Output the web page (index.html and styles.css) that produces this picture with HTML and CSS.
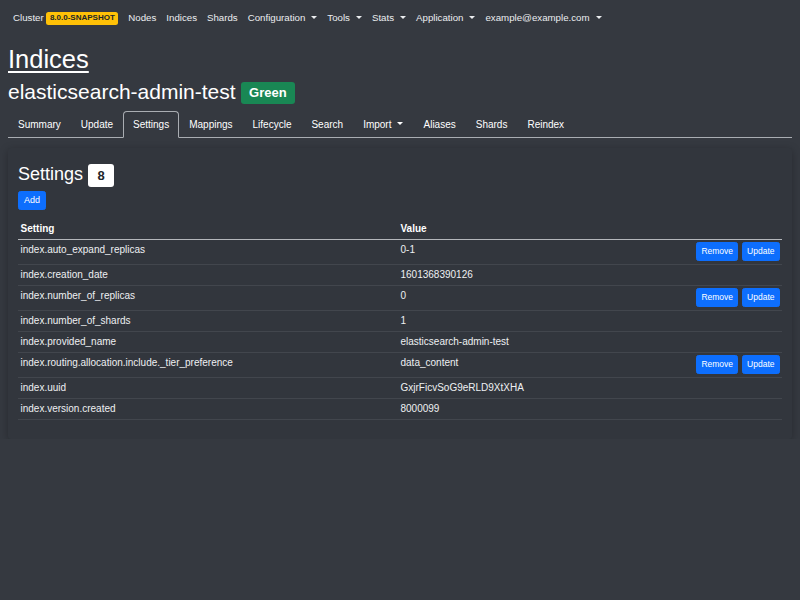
FILE: index.html
```html
<!DOCTYPE html>
<html lang="en">
<head>
<meta charset="utf-8">
<title>Indices - elasticsearch-admin-test</title>
<link rel="stylesheet" href="styles.css">
</head>
<body>
<nav class="topnav">
  <ul class="topnav-list">
    <li><a class="topnav-link" href="#">Cluster <span class="badge-version">8.0.0-SNAPSHOT</span></a></li>
    <li><a class="topnav-link" href="#">Nodes</a></li>
    <li><a class="topnav-link" href="#">Indices</a></li>
    <li><a class="topnav-link" href="#">Shards</a></li>
    <li><a class="topnav-link" href="#">Configuration<span class="caret"></span></a></li>
    <li><a class="topnav-link" href="#">Tools<span class="caret"></span></a></li>
    <li><a class="topnav-link" href="#">Stats<span class="caret"></span></a></li>
    <li><a class="topnav-link" href="#">Application<span class="caret"></span></a></li>
    <li><a class="topnav-link" href="#">example@example.com<span class="caret"></span></a></li>
  </ul>
</nav>
<main class="page">
  <h1 class="page-title"><a href="#">Indices</a></h1>
  <h2 class="index-title">elasticsearch-admin-test <span class="badge-health">Green</span></h2>
  <ul class="tabs">
    <li><a class="tab" href="#">Summary</a></li>
    <li><a class="tab" href="#">Update</a></li>
    <li><a class="tab active" href="#">Settings</a></li>
    <li><a class="tab" href="#">Mappings</a></li>
    <li><a class="tab" href="#">Lifecycle</a></li>
    <li><a class="tab" href="#">Search</a></li>
    <li><a class="tab" href="#">Import<span class="caret"></span></a></li>
    <li><a class="tab" href="#">Aliases</a></li>
    <li><a class="tab" href="#">Shards</a></li>
    <li><a class="tab" href="#">Reindex</a></li>
  </ul>
  <section class="card">
    <div class="card-head">
      <h3 class="card-title">Settings</h3>
      <span class="badge-count">8</span>
    </div>
    <button class="btn btn-add" type="button">Add</button>
    <table class="settings">
      <thead>
        <tr><th class="col-setting">Setting</th><th>Value</th><th class="col-actions"></th></tr>
      </thead>
      <tbody>
        <tr><td>index.auto_expand_replicas</td><td>0-1</td><td class="col-actions"><button class="btn btn-sm" type="button">Remove</button><button class="btn btn-sm" type="button">Update</button></td></tr>
        <tr><td>index.creation_date</td><td>1601368390126</td><td class="col-actions"></td></tr>
        <tr><td>index.number_of_replicas</td><td>0</td><td class="col-actions"><button class="btn btn-sm" type="button">Remove</button><button class="btn btn-sm" type="button">Update</button></td></tr>
        <tr><td>index.number_of_shards</td><td>1</td><td class="col-actions"></td></tr>
        <tr><td>index.provided_name</td><td>elasticsearch-admin-test</td><td class="col-actions"></td></tr>
        <tr><td>index.routing.allocation.include._tier_preference</td><td>data_content</td><td class="col-actions"><button class="btn btn-sm" type="button">Remove</button><button class="btn btn-sm" type="button">Update</button></td></tr>
        <tr><td>index.uuid</td><td>GxjrFicvSoG9eRLD9XtXHA</td><td class="col-actions"></td></tr>
        <tr><td>index.version.created</td><td>8000099</td><td class="col-actions"></td></tr>
      </tbody>
    </table>
  </section>
</main>
</body>
</html>
```
FILE: styles.css
```css
* { box-sizing: border-box; }
html, body {
  margin: 0;
  padding: 0;
}
body {
  background: #353940;
  color: #f1f3f5;
  font-family: "Liberation Sans", Arial, sans-serif;
  font-size: 10px;
  line-height: 1.5;
}
a { color: inherit; text-decoration: none; }
ul { list-style: none; margin: 0; padding: 0; }

.topnav {
  padding: 5px 8px;
}
.topnav-list {
  display: flex;
  flex-wrap: wrap;
}
.topnav-link {
  display: block;
  padding: 5px 5px;
  color: #eceef0;
  font-size: 9.7px;
  line-height: 15px;
}
.badge-version {
  display: inline-block;
  background: #ffc107;
  color: #212529;
  font-size: 8px;
  font-weight: 700;
  line-height: 1;
  padding: 2.5px 3.5px;
  border-radius: 2.5px;
  vertical-align: 1px;
}
.caret {
  display: inline-block;
  margin-left: 6px;
  vertical-align: 2.5px;
  border-top: 3px solid currentColor;
  border-right: 3px solid transparent;
  border-left: 3px solid transparent;
}

.page {
  padding: 0 8px;
}
.page-title {
  margin: 9px 0 4px;
  font-size: 25.5px;
  font-weight: 500;
  line-height: 1.2;
}
.page-title a {
  color: #fff;
  text-decoration: underline;
  text-decoration-thickness: 2px;
  text-underline-offset: 3px;
}
.index-title {
  margin: 0;
  font-size: 21px;
  font-weight: 500;
  line-height: 1.2;
  color: #fff;
  display: flex;
  align-items: center;
}
.badge-health {
  display: inline-block;
  margin-left: 5px;
  margin-top: 3px;
  background: #198754;
  color: #fff;
  font-size: 13px;
  font-weight: 700;
  line-height: 1;
  padding: 4.5px 8.5px;
  border-radius: 3px;
}

.tabs {
  display: flex;
  margin-top: 7px;
  border-bottom: 1px solid #a9adb2;
}
.tab {
  display: block;
  padding: 5px 9px;
  line-height: 15px;
  margin-bottom: -1px;
  border: 1px solid transparent;
  border-top-left-radius: 4px;
  border-top-right-radius: 4px;
  color: #fff;
}
.tab.active {
  border-color: #a9adb2 #a9adb2 #353940;
}

.card {
  margin-top: 10px;
  background: #32363d;
  border-radius: 3px;
  box-shadow: 0 2px 8px rgba(0, 0, 0, 0.28);
  padding: 10px;
}
.card-head {
  display: flex;
  align-items: baseline;
  margin-top: 2px;
}
.card-title {
  margin: 0;
  font-size: 18px;
  font-weight: 500;
  line-height: 28px;
  color: #fff;
}
.badge-count {
  margin-left: 5px;
  background: #fff;
  color: #212529;
  font-size: 13px;
  font-weight: 700;
  line-height: 1;
  padding: 5px 9.5px;
  border-radius: 3px;
}

.btn {
  display: inline-block;
  font-family: inherit;
  font-size: 9px;
  line-height: 13px;
  padding: 2px 5px;
  border: 1px solid #0d6efd;
  border-radius: 2.5px;
  background: #0d6efd;
  color: #fff;
  cursor: pointer;
}
.btn-sm {
  font-size: 8.5px;
  padding: 2px 4px;
}
.btn + .btn { margin-left: 4px; }
.btn-add {
  margin-top: 3px;
}

.settings {
  width: 100%;
  margin-top: 9px;
  margin-bottom: 9px;
  border-collapse: collapse;
  color: #eef0f2;
}
.settings th,
.settings td {
  padding: 2.5px;
  text-align: left;
  vertical-align: top;
  line-height: 15px;
}
.settings th {
  font-weight: 700;
  color: #fff;
}
.settings thead tr {
  border-bottom: 1px solid #b4b7bb;
}
.settings tbody tr {
  border-bottom: 1px solid #42464d;
}
.col-setting { width: 380px; }
.col-actions {
  width: 1%;
  white-space: nowrap;
}
.settings td.col-actions { text-align: right; }
```
